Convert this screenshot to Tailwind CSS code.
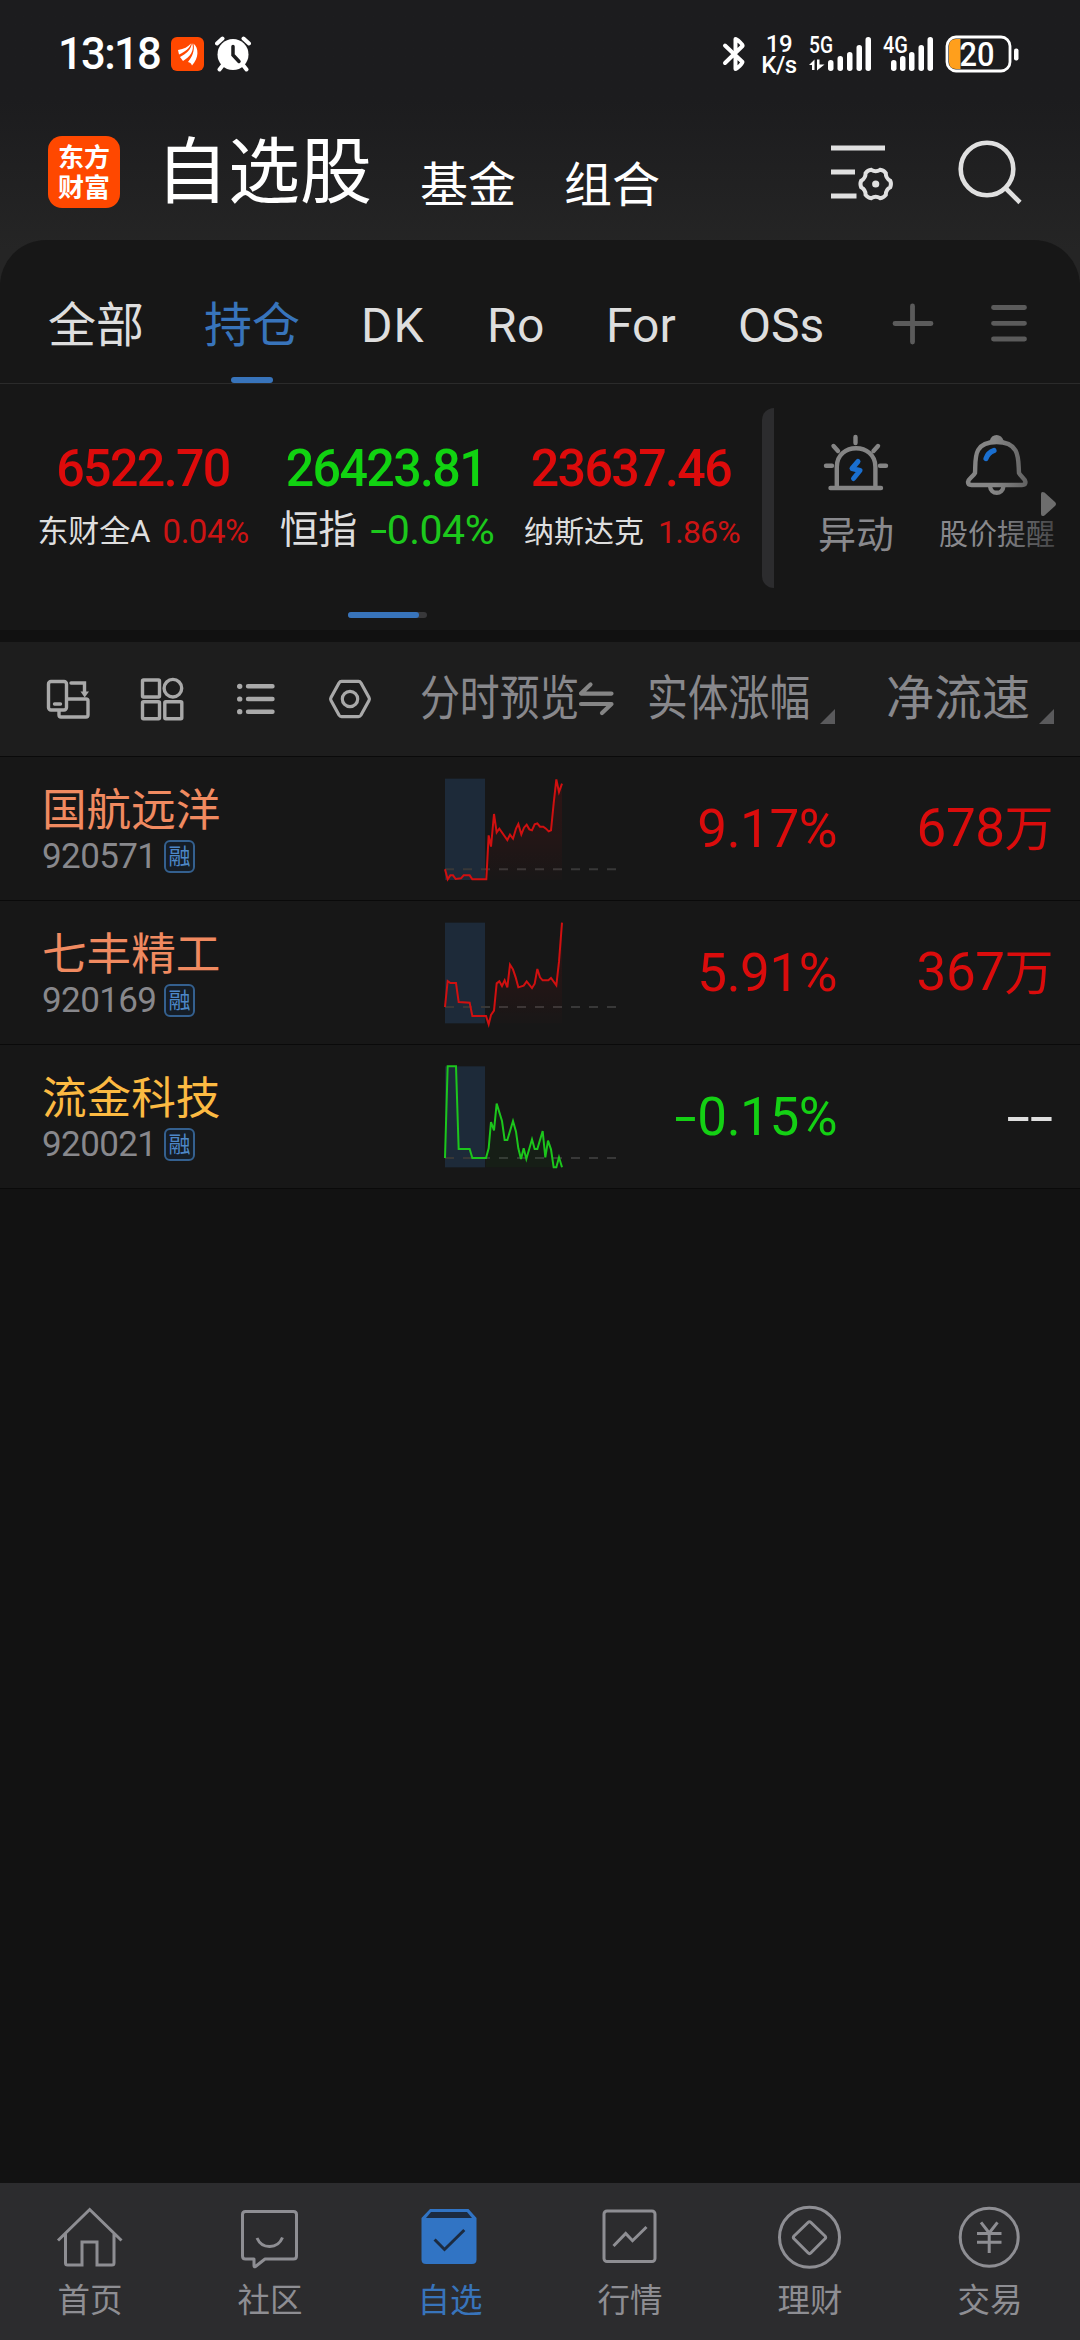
<!DOCTYPE html>
<html lang="zh-CN">
<head>
    <meta charset="UTF-8">
    <meta name="viewport" content="width=device-width, initial-scale=1.0">
    <title>自选股</title>
    <!-- Tailwind CSS for styling -->
    <script src="https://cdn.jsdelivr.net/npm/@tailwindcss/browser@4"></script>
    <style>
        body {
            font-family: Roboto, 'Noto Sans CJK SC', sans-serif;
        }
    </style>
</head>
<body class="bg-[#121212] text-[#dedede] antialiased">

<div class="w-[1080px] h-[2340px] flex flex-col overflow-hidden whitespace-nowrap bg-linear-to-b from-[#1c1c1e] from-[100px] to-[#252525] to-[250px]">

    <!-- Status bar -->
    <div class="h-[108px] shrink-0 flex items-center text-white font-medium">
        <div class="ml-[58px] w-[113px] text-[45px] leading-[50px] tracking-[-1.8px]"><div class="w-[113px] origin-left scale-x-[0.97]">13:18</div></div>
        <svg class="w-[33px] h-[34px]" viewBox="0 0 33 34" fill="#fff">
            <rect width="33" height="34" rx="6" fill="#ff4800"/>
            <path d="M7 13C13 12 17 10 20 6.500C19 11 14 15 8 17.500Z"/>
            <path d="M9 20C15 17 20 13 21 6C24 13 19 20 12 24Z"/>
            <path d="M17 25C21 20 24 14 22.500 6.500C28 11 28 21 21 28.500C20 26 19 25.500 17 25Z"/>
        </svg>
        <svg class="ml-[11px] w-[36px] h-[36px]" viewBox="0 0 36 36" fill="none" stroke="#fff" stroke-linecap="round">
            <path d="M2 7.500L7.500 2.500M34 7.500L28.500 2.500" stroke-width="4"/>
            <path d="M8 29L4.500 33.500M28 29L31.500 33.500" stroke-width="4"/>
            <circle cx="18" cy="18.500" r="15.500" fill="#fff" stroke="none"/>
            <path d="M18 10.500V19L24 25.500" stroke="#1c1c1e" stroke-width="3.500"/>
        </svg>

        <svg class="ml-[471px] w-[25px] h-[38px]" viewBox="0 0 25 38" fill="none" stroke="#fff" stroke-width="4" stroke-linecap="round" stroke-linejoin="round">
            <path d="M3 10.500L20.500 27C21 28 15 34 13.500 34V22M13.500 15V4C15 4 21.500 10 20.500 11L3 28"/>
        </svg>
        <div class="ml-[14px] w-[36px] text-center text-[24px] leading-[21px] tracking-[-0.500px] mt-[2px]">
            <div>19</div>
            <div>K/s</div>
        </div>
        <svg class="ml-[12px] w-[64px] h-[38px] overflow-visible" viewBox="0 0 64 38" fill="#fff">
            <text x="0" y="18" font-size="23" textLength="24" lengthAdjust="spacingAndGlyphs">5G</text>
            <path d="M0 30L5.500 24.500V35H3V30ZM8 24.500H10.500V29.500H15.500L8 35.500Z"/>
            <rect x="19" y="25" width="5.500" height="11" rx="2.700"/>
            <rect x="28.500" y="21" width="5.500" height="15" rx="2.700"/>
            <rect x="38" y="17" width="5.500" height="19" rx="2.700"/>
            <rect x="47.500" y="10" width="5.500" height="26" rx="2.700"/>
            <rect x="56.500" y="2" width="5.500" height="34" rx="2.700"/>
        </svg>
        <svg class="ml-[10px] w-[54px] h-[38px] overflow-visible" viewBox="0 0 54 38" fill="#fff">
            <text x="0" y="18" font-size="23" textLength="25" lengthAdjust="spacingAndGlyphs">4G</text>
            <rect x="8" y="25" width="5.500" height="11" rx="2.700"/>
            <rect x="17" y="21" width="5.500" height="15" rx="2.700"/>
            <rect x="26" y="17" width="5.500" height="19" rx="2.700"/>
            <rect x="35.500" y="10" width="5.500" height="26" rx="2.700"/>
            <rect x="44.500" y="2" width="5.500" height="34" rx="2.700"/>
        </svg>
        <svg class="ml-[8px] w-[75px] h-[38px]" viewBox="0 0 75 38">
            <path d="M11 4H15.500V34H11Q4 34 4 27V11Q4 4 11 4Z" fill="#ff9f1c"/>
            <rect x="2" y="2" width="63" height="34" rx="9" fill="none" stroke="#fff" stroke-width="2.800"/>
            <rect x="69" y="13.500" width="4.500" height="12" rx="2" fill="#fff"/>
            <text x="14.500" y="30.500" font-size="32.500" fill="#fff" textLength="35" lengthAdjust="spacingAndGlyphs">20</text>
        </svg>
    </div>

    <!-- App header -->
    <div class="h-[132px] shrink-0 flex items-start text-white">
        <div class="ml-[48px] mt-[28px] w-[72px] h-[72px] rounded-[14px] bg-[#ff4800] pt-[7px] text-center font-bold text-[26px] leading-[30px]">
            <div>东方</div>
            <div>财富</div>
        </div>
        <div class="ml-[36px] mt-[25px] text-[72px] leading-[80px]">自选股</div>
        <div class="ml-[48px] mt-[48px] text-[48px] leading-[60px]">基金</div>
        <div class="ml-[48px] mt-[48px] text-[48px] leading-[60px]">组合</div>
        <svg class="ml-[169px] mt-[32px] w-[70px] h-[64px]" viewBox="0 0 70 64" fill="none" stroke="#e0e0e0">
            <path d="M2 8H56M2 32H26M2 56H27.500" stroke-width="5"/>
            <g transform="translate(46.700 44)">
                <path d="M14.500 -3.300Q16 0 14.500 3.300Q10 5.800 10.100 10.900Q8 13.800 4.400 14.200Q0 11.300 -4.400 14.200Q-8 13.800 -10.100 10.900Q-10 5.800 -14.500 3.300Q-16 0 -14.500 -3.300Q-10 -5.800 -10.100 -10.900Q-8 -13.800 -4.400 -14.200Q0 -11.300 4.400 -14.200Q8 -13.800 10.100 -10.900Q10 -5.800 14.500 -3.300Z" stroke-width="4"/>
                <circle r="3.600" fill="#e0e0e0" stroke="none"/>
            </g>
        </svg>
        <svg class="ml-[56px] mt-[30px] w-[68px] h-[68px]" viewBox="0 0 68 68" fill="none" stroke="#e0e0e0" stroke-width="4.600">
            <circle cx="32" cy="31" r="26.300"/>
            <path d="M50.500 50L65 64.500"/>
        </svg>
    </div>

    <div class="grow flex flex-col rounded-t-[46px] bg-[#171717]">

        <!-- Group tabs -->
        <div class="h-[144px] shrink-0 border-b border-[#2b2b2b] flex text-[48px] leading-[60px] pt-[56px]">
            <div class="ml-[48px] w-[156px]">全部</div>
            <div class="w-[157px] text-[#3874bb]">
                <div>持仓</div>
                <div class="ml-[27px] mt-[21px] w-[42px] h-[6px] rounded-full bg-[#3874bb]"></div>
            </div>
            <div class="w-[126px] tracking-[1px]">DK</div>
            <div class="w-[119px] tracking-[0.500px]">Ro</div>
            <div class="w-[132px]">For</div>
            <div class="w-[152px]">OSs</div>
            <svg class="mt-[5px] w-[44px] h-[44px]" viewBox="0 0 44 44" stroke="#5b5b5b" stroke-width="4.800" stroke-linecap="round">
                <path d="M22.500 5V41M5 22.500H41"/>
            </svg>
            <svg class="ml-[53px] mt-[5px] w-[44px] h-[44px]" viewBox="0 0 44 44" stroke="#5b5b5b" stroke-width="4.800" stroke-linecap="round">
                <path d="M6.500 6.500H37.500M6.500 22.300H37.500M6.500 38H37.500"/>
            </svg>
        </div>

        <!-- Index quotes -->
        <div class="h-[246px] shrink-0 flex flex-col">
            <div class="h-[228px] flex">
                <div class="ml-[21px] w-[244px] pt-[55px] flex flex-col items-center">
                    <div class="text-[52px] leading-[60px] font-medium tracking-[-1.700px] scale-x-[0.965] text-[#dd0b0b]">6522.70</div>
                    <div class="mt-[13px] h-[40px] flex items-center gap-[12px]">
                        <span class="text-[31px] leading-[40px]">东财全A</span>
                        <span class="text-[33px] leading-[40px] tracking-[-0.5px] text-[#cc1414]">0.04%</span>
                    </div>
                </div>
                <div class="w-[244px] pt-[55px] flex flex-col items-center">
                    <div class="text-[52px] leading-[60px] font-medium tracking-[-1.700px] scale-x-[0.965] text-[#11d311] -ml-[3px]">26423.81</div>
                    <div class="mt-[11px] h-[40px] flex items-center gap-[13px]">
                        <span class="text-[39px] leading-[40px] tracking-[-0.5px]">恒指</span>
                        <span class="text-[41px] leading-[40px] tracking-[-0.5px] text-[#1cc81c]"><span class="inline-block scale-x-150 mx-[3px]">-</span>0.04%</span>
                    </div>
                </div>
                <div class="w-[244px] pt-[55px] flex flex-col items-center">
                    <div class="text-[52px] leading-[60px] font-medium tracking-[-1.700px] scale-x-[0.965] text-[#dd0b0b]">23637.46</div>
                    <div class="mt-[13px] h-[40px] flex items-center gap-[14px] ml-[2px]">
                        <span class="text-[30px] leading-[40px]">纳斯达克</span>
                        <span class="text-[32px] leading-[40px] tracking-[-0.800px] text-[#cc1414]">1.86%</span>
                    </div>
                </div>
                <div class="ml-[9px] mt-[24px] w-[12px] h-[180px] rounded-l-[12px] bg-[#2c2c2e]"></div>
                <div class="ml-[46px] w-[72px] pt-[46px] flex flex-col items-center text-[#89898d]">
                    <svg class="w-[72px] h-[64px]" viewBox="0 0 72 64" fill="none" stroke="#858585" stroke-width="4.400" stroke-linecap="round">
                        <path d="M16.800 57V37C16.800 12 55.400 12 55.400 37V57M10.500 58H61"/>
                        <path d="M35.500 7V13M13.500 16L18 21M58 16L53.500 21M6 35.700H12M60 35.700H66"/>
                        <path d="M38 31.500L32 38.500L40 40.500L33.500 48.500" stroke="#1a6fd0" stroke-width="5" stroke-linejoin="round"/>
                    </svg>
                    <div class="mt-[17px] text-[38px] leading-[48px]">异动</div>
                </div>
                <div class="ml-[47px] w-[116px] pt-[46px] flex flex-col items-center relative text-[#89898d]">
                    <svg class="w-[72px] h-[72px]" viewBox="0 0 72 72" fill="none" stroke="#858585" stroke-width="4.400" stroke-linejoin="round">
                        <path d="M14 43C15 30 11 12 35.600 12C60 12 57 30 58 43C60 47 64 48 64.500 52Q64.500 55 61 55H10.500Q7 55 7 52C7.500 48 12 47 14 43Z"/>
                        <path d="M29.500 11.500Q31 6 35.600 6Q40 6 42 11.500Z" fill="#858585" stroke-width="2"/>
                        <path d="M29 56C29.500 65 42 65 42.500 56"/>
                        <path d="M33 20.500Q27 22.500 25 28.500" stroke="#1a6fd0" stroke-width="5.200" stroke-linecap="round"/>
                    </svg>
                    <div class="mt-[9px] w-[116px] text-[29px] leading-[48px]">股价提醒</div>
                    <div class="absolute right-0 top-[46px] w-[60px] h-[130px] bg-linear-to-r from-[#171717]/0 to-[#171717]/60"></div>
                    <svg class="absolute left-[102px] top-[107px] w-[16px] h-[26px]" viewBox="0 0 16 26" fill="#6d6d6d">
                        <path d="M0 3Q0 0 3.500 1.500L14 11Q16 13 14 15L3.500 24.500Q0 26 0 23Z"/>
                    </svg>
                </div>
            </div>
            <div class="ml-[348px] w-[79px] h-[6px] rounded-full bg-[#38383a]">
                <div class="w-[71px] h-[6px] rounded-full bg-[#3874bb]"></div>
            </div>
        </div>
        <div class="h-[12px] shrink-0 bg-[#111111]"></div>

        <!-- Column headings -->
        <div class="h-[115px] shrink-0 bg-[#1d1d1d] border-b border-[#0a0a0a] flex items-center text-[48px] leading-[60px] text-[#88888c]">
            <svg class="ml-[44px] w-[48px] h-[48px]" viewBox="0 0 48 48" fill="none" stroke="#a9a9a9" stroke-width="3.400" stroke-linecap="round">
                <rect x="4.500" y="6.500" width="18" height="28.500" rx="2.500"/>
                <path d="M27 8H40.500V17M24 24H42Q44 24 44 26V40Q44 42 42 42H17Q15 42 15 40V36M10.500 29H16.500"/>
                <path d="M36.500 16.500H45L40.700 22.500Z" fill="#a9a9a9" stroke="none"/>
            </svg>
            <svg class="ml-[46px] w-[48px] h-[48px]" viewBox="0 0 48 48" fill="none" stroke="#a9a9a9" stroke-width="3.400">
                <rect x="4.500" y="5" width="17" height="17" rx="1"/>
                <circle cx="34.900" cy="13.200" r="8.800"/>
                <rect x="4.500" y="26.800" width="17" height="17" rx="1"/>
                <rect x="26.800" y="26.800" width="17" height="17" rx="1"/>
            </svg>
            <svg class="ml-[46px] w-[48px] h-[48px]" viewBox="0 0 48 48" fill="none" stroke="#a9a9a9" stroke-width="4.400" stroke-linecap="round">
                <path d="M7.600 11.300H7.800M7.600 24H7.800M7.600 36.700H7.800" stroke-width="5.200"/>
                <path d="M16 11.300H40.500M16 24H40.500M16 36.700H40.500"/>
            </svg>
            <svg class="ml-[46px] w-[48px] h-[48px]" viewBox="0 0 48 48" fill="none" stroke="#a9a9a9" stroke-width="3.200" stroke-linejoin="round">
                <path d="M15.500 6.300H32.500Q34 6.300 35 8L43 22.500Q43.800 24 43 25.500L35 40Q34 41.700 32.500 41.700H15.500Q14 41.700 13 40L5 25.500Q4.200 24 5 22.500L13 8Q14 6.300 15.500 6.300Z"/>
                <circle cx="24" cy="24" r="7.700"/>
            </svg>
            <div class="ml-[46px] w-[158px]"><div class="w-[192px] origin-left scale-x-[0.83]">分时预览</div></div>
            <svg class="-ml-[2px] w-[40px] h-[40px]" viewBox="0 0 40 40" fill="none" stroke="#858585" stroke-width="4.200" stroke-linecap="round" stroke-linejoin="round">
                <path d="M35.500 14.600H5L14.500 5.500M5 25H35.500L26 34"/>
            </svg>
            <div class="ml-[31px] w-[164px]"><div class="w-[192px] origin-left scale-x-[0.85]">实体涨幅</div></div>
            <svg class="ml-[9px] mt-[35px] w-[15px] h-[15px]" viewBox="0 0 15 15" fill="#5a5a5c"><path d="M15 0V15H0Z"/></svg>
            <div class="ml-[51px] w-[144px]">净流速</div>
            <svg class="ml-[9px] mt-[35px] w-[15px] h-[15px]" viewBox="0 0 15 15" fill="#5a5a5c"><path d="M15 0V15H0Z"/></svg>
        </div>

        <!-- Stock rows -->
        <div class="h-[144px] shrink-0 border-b border-[#0a0a0a] flex items-center">
            <div class="ml-[42px] w-[378px] -mt-[1px]">
                <div class="text-[44.600px] leading-[58px] text-[#f08a60]">国航远洋</div>
                <div class="flex items-center h-[34px]">
                    <div class="w-[122px] text-[35px] leading-[34px] tracking-[-0.600px] text-[#88888c]">920571</div>
                    <div class="w-[31px] h-[33px] -mt-[2px] rounded-[6px] border-2 border-[#34608f] bg-[#151d26] text-[#4d87c7] text-[22px] leading-[30px] text-center">融</div>
                </div>
            </div>
            <svg class="w-[220px] h-[143px]" viewBox="0 -9 660 429" fill="none">
                <defs>
                    <linearGradient id="redFade" x1="0" y1="0" x2="0" y2="1">
                        <stop offset="0" stop-color="#e00000" stop-opacity="0.130"/>
                        <stop offset="1" stop-color="#e00000" stop-opacity="0.010"/>
                    </linearGradient>
                </defs>
                <rect x="75" y="56" width="120" height="304" fill="#1d2a39"/>
                <path d="M75 328H588" stroke="#383838" stroke-width="6" stroke-dasharray="27 27"/>
                <path d="M199 358L206 226L213 260L222 162L230 217L238 206L262 240L270 224L279 236L288 206L295 192L304 223L312 203L320 194L328 208L336 211L344 193L352 190L360 200L370 200L378 206L386 214L393 211L401 130L409 58L417 96L426 71V360H199Z" fill="url(#redFade)"/>
                <path d="M75 328L83 358L91 346L99 346L107 357L123 355L131 346H149L157 358H199L206 226L213 260L222 162L230 217L238 206L262 240L270 224L279 236L288 206L295 192L304 223L312 203L320 194L328 208L336 211L344 193L352 190L360 200L370 200L378 206L386 214L393 211L401 130L409 58L417 96L426 71" stroke="#d01010" stroke-width="6"/>
            </svg>
            <div class="w-[197px] text-right text-[53px] leading-[60px] tracking-[-0.500px] text-[#da0c0c]">9.17%</div>
            <div class="w-[216px] text-right text-[53px] leading-[60px] tracking-[-0.500px] text-[#da0c0c]">678<span class="text-[49px]">万</span></div>
        </div>
        <div class="h-[144px] shrink-0 border-b border-[#0a0a0a] flex items-center">
            <div class="ml-[42px] w-[378px] -mt-[1px]">
                <div class="text-[44.600px] leading-[58px] text-[#f08a60]">七丰精工</div>
                <div class="flex items-center h-[34px]">
                    <div class="w-[122px] text-[35px] leading-[34px] tracking-[-0.600px] text-[#88888c]">920169</div>
                    <div class="w-[31px] h-[33px] -mt-[2px] rounded-[6px] border-2 border-[#34608f] bg-[#151d26] text-[#4d87c7] text-[22px] leading-[30px] text-center">融</div>
                </div>
            </div>
            <svg class="w-[220px] h-[143px]" viewBox="0 3 660 429" fill="none">
                <rect x="75" y="68" width="120" height="302" fill="#1d2a39"/>
                <path d="M75 321H588" stroke="#383838" stroke-width="6" stroke-dasharray="27 27"/>
                <path d="M205 370L213 345L222 332L230 250L238 244L246 258L254 241L262 262L270 194L279 208L287 232L295 262L311 257L320 244L336 264L344 251L352 207L360 232L368 241H385L393 234L409 256L417 185L426 68V370Z" fill="url(#redFade)"/>
                <path d="M75 321L83 243L91 249H108L116 306L149 308L157 348H198L206 373L213 345L222 332L230 250L238 244L246 258L254 241L262 262L270 194L279 208L287 232L295 262L311 257L320 244L336 264L344 251L352 207L360 232L368 241H385L393 234L409 256L417 185L426 68" stroke="#d01010" stroke-width="6"/>
            </svg>
            <div class="w-[197px] text-right text-[53px] leading-[60px] tracking-[-0.500px] text-[#da0c0c]">5.91%</div>
            <div class="w-[216px] text-right text-[53px] leading-[60px] tracking-[-0.500px] text-[#da0c0c]">367<span class="text-[49px]">万</span></div>
        </div>
        <div class="h-[144px] shrink-0 border-b border-[#0a0a0a] flex items-center">
            <div class="ml-[42px] w-[378px] -mt-[1px]">
                <div class="text-[44.600px] leading-[58px] text-[#fcba42]">流金科技</div>
                <div class="flex items-center h-[34px]">
                    <div class="w-[122px] text-[35px] leading-[34px] tracking-[-0.600px] text-[#88888c]">920021</div>
                    <div class="w-[31px] h-[33px] -mt-[2px] rounded-[6px] border-2 border-[#34608f] bg-[#151d26] text-[#4d87c7] text-[22px] leading-[30px] text-center">融</div>
                </div>
            </div>
            <svg class="w-[220px] h-[143px]" viewBox="0 15 660 429" fill="none">
                <rect x="75" y="79" width="120" height="303" fill="#1d2a39"/>
                <path d="M75 354H588" stroke="#383838" stroke-width="6" stroke-dasharray="27 27"/>
                <path d="M198 354L206 325L213 246L222 271L230 191L246 243L254 300H262L279 243L288 275L295 325L303 357L311 325L319 357L336 298L344 327H352L368 273L376 352L384 302L393 328L401 382H198Z" fill="#00c800" fill-opacity="0.040"/>
                <path d="M75 354L83 79H108L116 327H149L157 354H198L206 325L213 246L222 271L230 191L246 243L254 300H262L279 243L288 275L295 325L303 357L311 325L319 357L336 298L344 327H352L368 273L376 352L384 302L393 328L401 382H409L417 352L426 382" stroke="#1cc61c" stroke-width="6"/>
            </svg>
            <div class="w-[197px] text-right text-[53px] leading-[60px] tracking-[-0.500px] text-[#14d014]"><span class="inline-block scale-x-150 mx-[5px]">-</span>0.15%</div>
            <div class="w-[216px] flex justify-end text-[53px] leading-[60px]"><span class="origin-right scale-x-[1.600]">--</span></div>
        </div>
        <div class="grow bg-[#121212]"></div>

        <!-- Bottom navigation -->
        <div class="h-[157px] shrink-0 bg-[#2c2c2e] grid grid-cols-6 pt-[17px] text-[32.500px] leading-[40px] text-[#8e8e93]">
            <div class="flex flex-col items-center gap-[9px]">
                <svg class="w-[72px] h-[72px]" viewBox="0 0 72 72" fill="none" stroke="#8e8e93" stroke-width="3">
                    <path d="M4 40.500L35.700 9.500L67.500 40.500M11.500 33V63Q11.500 65 13.500 65H28V42H43V65H58Q60 65 60 63V33"/>
                </svg>
                <div>首页</div>
            </div>
            <div class="flex flex-col items-center gap-[9px]">
                <svg class="w-[72px] h-[72px]" viewBox="0 0 72 72" fill="none" stroke="#8e8e93" stroke-width="3" stroke-linejoin="round">
                    <path d="M11.500 11.500H59.500Q62.500 11.500 62.500 14.500V56Q62.500 59 59.500 59H31L21.500 66.500Q20 67.500 20 65.500V59H11.500Q8.500 59 8.500 56V14.500Q8.500 11.500 11.500 11.500Z"/>
                    <path d="M23 38C28 49.500 43.500 49.500 48.500 37.500"/>
                </svg>
                <div>社区</div>
            </div>
            <div class="flex flex-col items-center gap-[9px] text-[#3874bb]">
                <svg class="w-[72px] h-[72px]" viewBox="0 0 72 72" fill="none">
                    <path d="M16 9H54.500L62.500 18V59.500Q62.500 64 58 64H12Q7.500 64 7.500 59.500V18Z" fill="#3174c4"/>
                    <path d="M17 12H53L58 18H12Z" fill="#1c2b40"/>
                    <path d="M20.600 39.500L30.500 49.500L50.300 30" stroke="#1c2b40" stroke-width="3"/>
                </svg>
                <div>自选</div>
            </div>
            <div class="flex flex-col items-center gap-[9px]">
                <svg class="w-[72px] h-[72px]" viewBox="0 0 72 72" fill="none" stroke="#8e8e93" stroke-width="3">
                    <rect x="10" y="11" width="51" height="50.500" rx="3"/>
                    <path d="M19.500 46L31.700 33.500L38.500 40.700L52.500 27"/>
                </svg>
                <div>行情</div>
            </div>
            <div class="flex flex-col items-center gap-[9px]">
                <svg class="w-[72px] h-[72px]" viewBox="0 0 72 72" fill="none" stroke="#8e8e93" stroke-width="3" stroke-linejoin="round">
                    <circle cx="35.500" cy="37.300" r="30"/>
                    <path d="M34 22.500Q35.500 21 37 22.500L51 36Q52.300 37.400 51 38.800L37 52.800Q35.500 54.300 34 52.800L20 38.800Q18.700 37.400 20 36Z"/>
                </svg>
                <div>理财</div>
            </div>
            <div class="flex flex-col items-center gap-[9px]">
                <svg class="w-[72px] h-[72px]" viewBox="0 0 72 72" fill="none" stroke="#8e8e93" stroke-width="3">
                    <circle cx="35.200" cy="37.300" r="29"/>
                    <path d="M27 22.300L35.200 33L43.500 22.300M35.200 33V53M23 33.500H47.500M23 42.300H47.500"/>
                </svg>
                <div>交易</div>
            </div>
        </div>
    </div>
</div>

</body>
</html>
